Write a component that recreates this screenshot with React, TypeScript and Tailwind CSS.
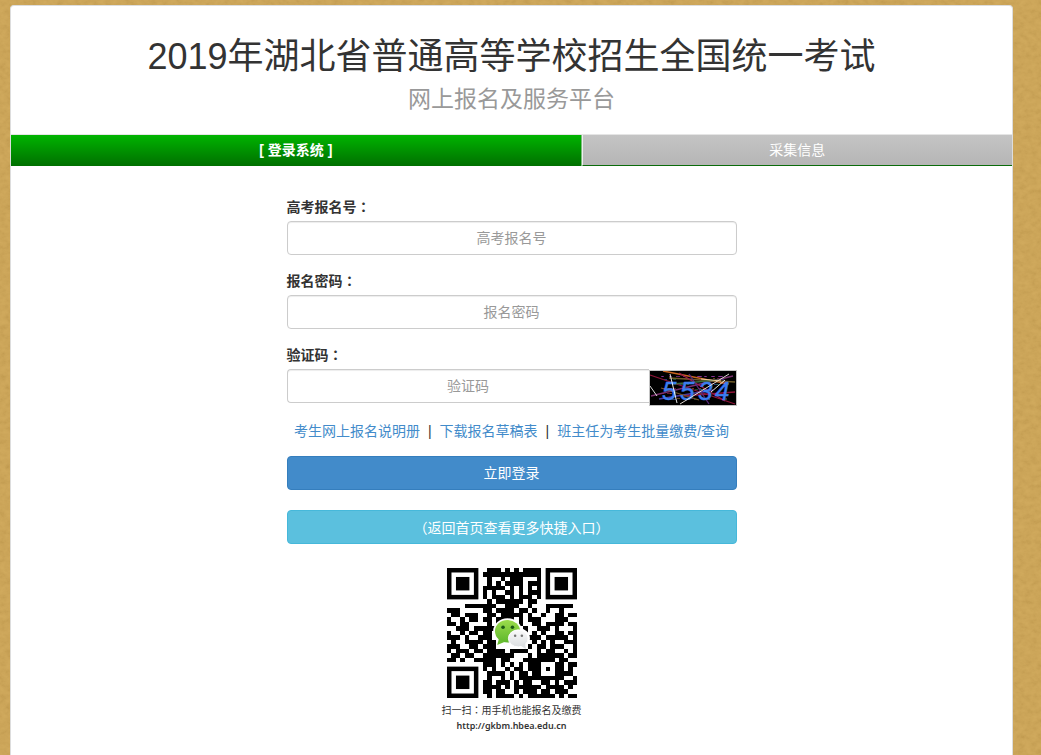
import type { ReactNode } from 'react'

const QR_ROWS = [
  '00000000011101010111100000000',
  '00000000111111111111100000000',
  '00000000010010111000100000000',
  '00000000010101111011100000000',
  '00000000111110101010100000000',
  '00000000101001101011100000000',
  '00000000101110101110100000000',
  '00000000010111111011000000000',
  '00001111111001110010001111110',
  '11100000110111101101001001000',
  '01101110011011111010010011011',
  '10010110110111101011100011100',
  '11011000010100001001101111011',
  '00111011111000000100111010001',
  '10010110110000000101010011011',
  '11101001110000000011101111101',
  '01001111011000000001010100111',
  '11100110111000000010110111001',
  '10111011011110111100101100101',
  '01101100111111100010111111011',
  '11010011111011000111111101100',
  '00000000111010101011100011011',
  '00000000101001011011101011010',
  '00000000011110101101100011110',
  '00000000010010101111111111001',
  '00000000110111010110011010111',
  '00000000111101011111101111010',
  '00000000110110010111011011100',
  '00000000010111101011111101011',
]

const FINDERS = [
  [0, 0],
  [22, 0],
  [0, 22],
]

// straight noise lines of the captcha: x1, y1, x2, y2, color
const NOISE: [number, number, number, number, string][] = [
  [1, 5, 86, 34, '#8e1438'],
  [2, 26, 84, 6, '#7a2f6f'],
  [14, 1, 80, 14, '#c8641e'],
  [20, 8, 86, 12, '#6d5a28'],
  [10, 29, 64, 20, '#4b3aa0'],
  [30, 3, 76, 31, '#9c1c4a'],
  [24, 14, 70, 10, '#3d6a3a'],
  [34, 26, 86, 22, '#8e1438'],
  [40, 4, 60, 34, '#5a2a80'],
  [12, 18, 50, 30, '#74502a'],
  [1, 16, 8, 26, '#f2f2f2'],
  [21, 4, 28, 33, '#ffffff'],
  [31, 34, 80, 4, '#f5eee6'],
  [52, 9, 72, 11, '#ffd9a8'],
  [62, 22, 76, 10, '#ffffff'],
]

const SPECKS = ['#a33bb0', '#b36a2c', '#3b63c4', '#2f7a4a', '#a8244e']

function Texture() {
  return (
    <svg className="absolute inset-0 -z-10 h-full w-full" aria-hidden="true">
      <filter id="paper">
        <feTurbulence type="fractalNoise" baseFrequency="0.16 0.2" numOctaves="4" seed="7" />
        <feColorMatrix values="0.2 0 0 0 0.66  0.2 0 0 0 0.51  0.18 0 0 0 0.23  0 0 0 0 1" colorInterpolationFilters="sRGB" />
      </filter>
      <rect width="100%" height="100%" fill="#caa356" />
      <rect width="100%" height="100%" filter="url(#paper)" opacity="0.5" />
    </svg>
  )
}

function Captcha() {
  return (
    <svg viewBox="0 0 88 36" className="mt-px h-9 w-22 shrink-0" role="img" aria-label="验证码图片">
      <rect width="88" height="36" fill="#000" />
      {Array.from({ length: 70 }, (_, i) => (
        <rect
          key={i}
          x={12 + ((i * 37) % 64)}
          y={6 + ((i * i * 7 + i * 5) % 25)}
          width={2 + (i % 3)}
          height="1"
          fill={SPECKS[i % SPECKS.length]}
          opacity="0.6"
        />
      ))}
      {NOISE.slice(0, 10).map(([x1, y1, x2, y2, color], i) => (
        <line key={i} x1={x1} y1={y1} x2={x2} y2={y2} stroke={color} strokeWidth="1.3" />
      ))}
      <text
        x="13 31 49 66"
        y="30"
        fontSize="26"
        fontStyle="italic"
        fill="#3b7df0"
        stroke="#3b7df0"
        strokeWidth="0.4"
        fontFamily="Liberation Sans, sans-serif"
      >
        5534
      </text>
      {NOISE.slice(10).map(([x1, y1, x2, y2, color], i) => (
        <line key={i} x1={x1} y1={y1} x2={x2} y2={y2} stroke={color} strokeWidth="0.9" />
      ))}
      <rect x="0.5" y="0.5" width="87" height="35" fill="none" stroke="#c4c4c4" />
    </svg>
  )
}

function QrCode() {
  return (
    <svg viewBox="0 0 29 29" className="h-[130px] w-[130px]" role="img" aria-label="二维码">
      <rect width="29" height="29" fill="#fff" />
      <g shapeRendering="crispEdges">
        {QR_ROWS.map((row, y) =>
          row.split('').map((cell, x) => cell === '1' && <rect key={`${x}-${y}`} x={x} y={y} width="1" height="1" fill="#000" />)
        )}
      </g>
      {FINDERS.map(([x, y]) => (
        <g key={`${x}-${y}`}>
          <rect x={x + 0.5} y={y + 0.5} width="6" height="6" fill="#fff" stroke="#000" />
          <rect x={x + 2} y={y + 2} width="3" height="3" fill="#000" />
        </g>
      ))}
      <defs>
        <linearGradient id="bubble" x1="0" y1="0" x2="0" y2="1">
          <stop offset="0" stopColor="#9bdc4c" />
          <stop offset="1" stopColor="#5fb82c" />
        </linearGradient>
        <linearGradient id="bubble2" x1="0" y1="0" x2="0" y2="1">
          <stop offset="0" stopColor="#fafafa" />
          <stop offset="1" stopColor="#dcdfe1" />
        </linearGradient>
      </defs>
      <ellipse cx="13.5" cy="14.1" rx="3.2" ry="2.9" fill="#fff" />
      <ellipse cx="15.9" cy="15.700" rx="2.600" ry="2.300" fill="#fff" />
      <ellipse cx="13.5" cy="14.1" rx="2.8" ry="2.5" fill="url(#bubble)" />
      <path d="M11.600 15.700l-.4 1.500 1.600-.7z" fill="#68bd30" />
      <circle cx="12.500" cy="13.200" r="0.4" fill="#1e5a16" />
      <circle cx="14.600" cy="13.200" r="0.4" fill="#1e5a16" />
      <ellipse cx="15.900" cy="15.700" rx="2.200" ry="1.900" fill="url(#bubble2)" stroke="#fff" strokeWidth="0.2" />
      <path d="M16.400 17.300l1.200.8-.2-1.400z" fill="#dcdfe1" />
      <circle cx="15.200" cy="15.100" r="0.28" fill="#777" />
      <circle cx="16.700" cy="15.100" r="0.28" fill="#777" />
    </svg>
  )
}

// the TC face centres full-width punctuation in its cell
function Punct({ children }: { children: string }) {
  return <span className="font-['Noto_Sans_CJK_TC',sans-serif]">{children}</span>
}

interface FieldProps {
  id: string
  label: string
  type?: string
  children?: ReactNode
}

function Field({ id, label, type = 'text', children }: FieldProps) {
  return (
    <div className="mb-[15px]">
      <label htmlFor={id} className="mb-[5px] block h-5 font-bold">
        {label}
        <Punct>：</Punct>
      </label>
      <div className="flex h-[34px]">
        <input
          id={id}
          type={type}
          placeholder={label}
          className={`h-full min-w-0 flex-1 border border-[#ccc] bg-white px-3 text-center shadow-[inset_0_1px_1px_rgba(0,0,0,0.075)] outline-none placeholder:text-[#999] ${children ? 'rounded-l border-r-0' : 'rounded'}`}
        />
        {children}
      </div>
    </div>
  )
}

export default function App() {
  return (
    <div className="relative isolate flex min-h-screen flex-col pt-[5px] pr-7 pl-[10px] font-['Liberation_Sans','Noto_Sans_CJK_SC',sans-serif] text-sm leading-5 text-[#333]">
      <Texture />
      <main className="flex-1 rounded-t border border-b-0 border-[#ddd] bg-white">
        <header className="pt-[31px] pb-[18px] text-center">
          <h1 className="text-4xl leading-10">2019年湖北省普通高等学校招生全国统一考试</h1>
          <p className="mt-[5px] text-[23px] leading-[34px] text-[#999]">网上报名及服务平台</p>
        </header>

        <nav className="flex border-t border-[#e5e5e5] text-center leading-[30px] text-white">
          <a href="#login" className="w-[57%] border-r border-[#7dbb7d] bg-linear-to-b from-[#00b400] to-[#007000] pb-px font-bold">
            [ 登录系统 ]
          </a>
          <a href="#info" className="flex-1 border-b border-l border-b-[#0a6b0a] border-l-[#eee] bg-linear-to-b from-[#c4c4c4] to-[#b5b5b5]">
            采集信息
          </a>
        </nav>

        <form className="mx-auto mt-[30px] w-full max-w-[450px]" onSubmit={e => e.preventDefault()}>
          <Field id="account" label="高考报名号" />
          <Field id="password" label="报名密码" type="password" />
          <Field id="code" label="验证码">
            <Captcha />
          </Field>

          <div className="mt-[18px] flex justify-center gap-2 whitespace-nowrap">
            <a href="#manual" className="text-[#428bca]">考生网上报名说明册</a>
            <span>|</span>
            <a href="#draft" className="text-[#428bca]">下载报名草稿表</a>
            <span>|</span>
            <a href="#batch" className="text-[#428bca]">班主任为考生批量缴费/查询</a>
          </div>

          <button type="submit" className="mt-[15px] block h-[34px] w-full rounded border border-[#357ebd] bg-[#428bca] text-white">
            立即登录
          </button>
          <button type="button" className="mt-5 block h-[34px] w-full rounded border border-[#46b8da] bg-[#5bc0de] text-white">
            <Punct>（</Punct>
            返回首页查看更多快捷入口
            <Punct>）</Punct>
          </button>
        </form>

        <div className="mt-6 flex flex-col items-center">
          <QrCode />
          <p className="mt-1 h-4 text-[10px] leading-4">
            扫一扫
            <Punct>：</Punct>
            用手机也能报名及缴费
          </p>
          <p className="font-['Noto_Sans',sans-serif] text-[9px] leading-4 font-semibold">http://gkbm.hbea.edu.cn</p>
        </div>
      </main>
    </div>
  )
}
